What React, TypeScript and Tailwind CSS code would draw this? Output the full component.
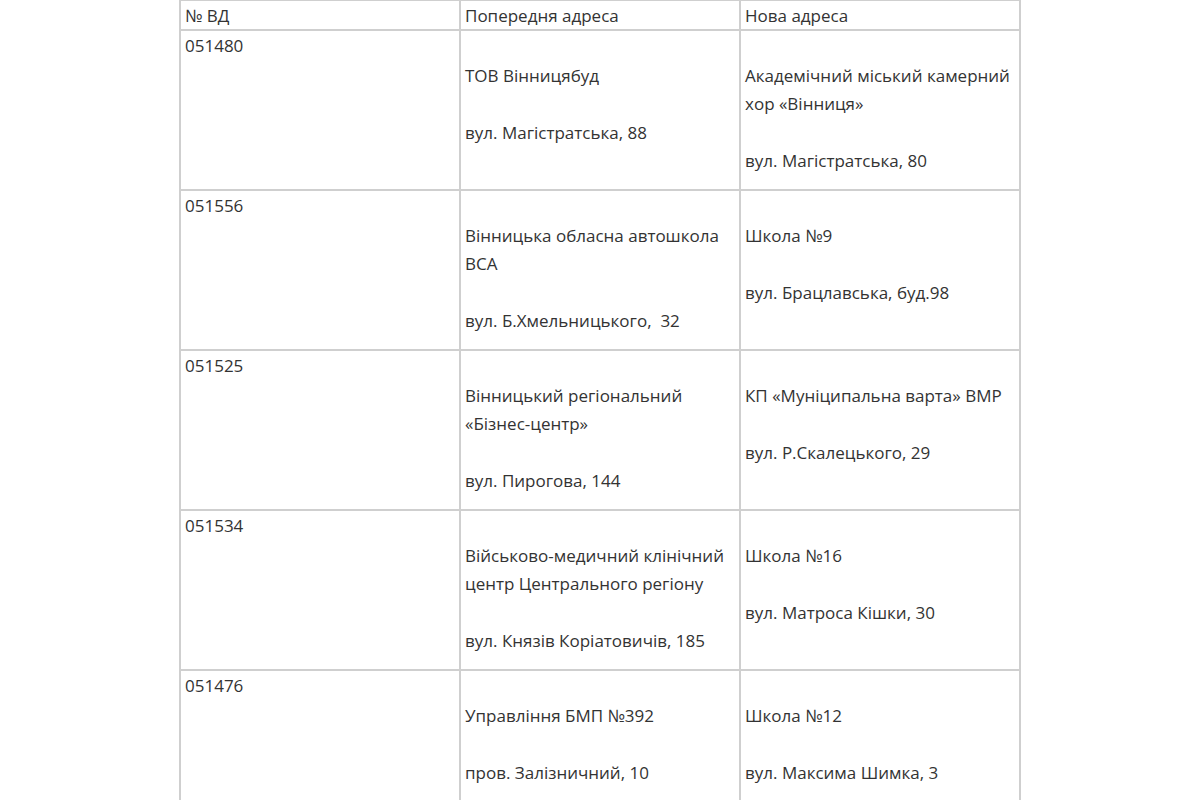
const rows = [
  {
    id: '051480',
    prev: [['ТОВ Вінницябуд'], ['вул. Магістратська, 88']],
    next: [['Академічний міський камерний', 'хор «Вінниця»'], ['вул. Магістратська, 80']],
  },
  {
    id: '051556',
    prev: [['Вінницька обласна автошкола', 'ВСА'], ['вул. Б.Хмельницького,  32']],
    next: [['Школа №9'], ['вул. Брацлавська, буд.98']],
  },
  {
    id: '051525',
    prev: [['Вінницький регіональний', '«Бізнес-центр»'], ['вул. Пирогова, 144']],
    next: [['КП «Муніципальна варта» ВМР'], ['вул. Р.Скалецького, 29']],
  },
  {
    id: '051534',
    prev: [['Військово-медичний клінічний', 'центр Центрального регіону'], ['вул. Князів Коріатовичів, 185']],
    next: [['Школа №16'], ['вул. Матроса Кішки, 30']],
  },
  {
    id: '051476',
    prev: [['Управління БМП №392'], ['пров. Залізничний, 10']],
    next: [['Школа №12'], ['вул. Максима Шимка, 3']],
  },
];

function Cell({ blocks }: { blocks: string[][] }) {
  return (
    <td className="border-2 border-[#cfcfcf] px-[4px] align-top">
      <div className="flex flex-col gap-[29px] pt-[31px]">
        {blocks.map((lines, i) => (
          <p key={i} className="whitespace-pre">
            {lines.map((l, j) => (
              <span key={j} className="block">
                {l}
              </span>
            ))}
          </p>
        ))}
      </div>
    </td>
  );
}

export default function App() {
  return (
    <div className="w-[1200px] h-[800px] overflow-hidden bg-white font-['Open_Sans',sans-serif] text-[17px] leading-[28px] text-[#333333]">
      <table className="ml-[179px] mt-[-1px] w-[842px] border-collapse table-fixed">
        <tbody>
          <tr className="h-[30px]">
            <td className="border-2 border-[#cfcfcf] px-[4px] pt-[1px] leading-[27px] align-top">№ ВД</td>
            <td className="border-2 border-[#cfcfcf] px-[4px] pt-[1px] leading-[27px] align-top">Попередня адреса</td>
            <td className="border-2 border-[#cfcfcf] px-[4px] pt-[1px] leading-[27px] align-top">Нова адреса</td>
          </tr>
          {rows.map((r) => (
            <tr key={r.id} className="h-[160px]">
              <td className="border-2 border-[#cfcfcf] px-[4px] pt-[1px] align-top">{r.id}</td>
              <Cell blocks={r.prev} />
              <Cell blocks={r.next} />
            </tr>
          ))}
        </tbody>
      </table>
    </div>
  );
}
